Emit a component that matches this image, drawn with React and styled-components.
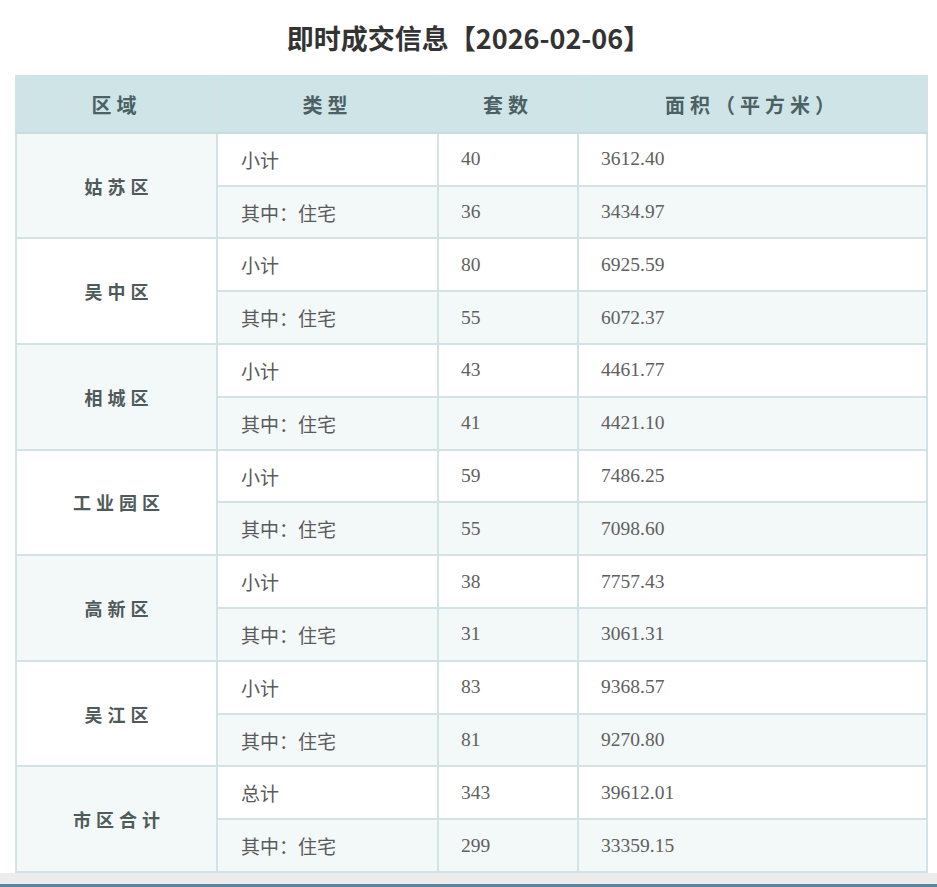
import React from "react";
import styled, { createGlobalStyle } from "styled-components";

const GlobalStyle = createGlobalStyle`
  html, body {
    margin: 0;
    padding: 0;
    background: #ffffff;
  }
  body {
    font-family: "Noto Sans CJK SC", "Noto Sans", sans-serif;
  }
`;

const Page = styled.div`
  width: 937px;
  height: 887px;
  display: flex;
  flex-direction: column;
  overflow: hidden;
`;

const Title = styled.h1`
  margin: 0;
  padding: 18px 0 0 0;
  height: 75px;
  box-sizing: border-box;
  text-align: center;
  font-size: 27px;
  line-height: 40px;
  font-weight: 700;
  color: #333333;
`;

const TableWrap = styled.div`
  padding: 0 11px 0 15px;
`;

const Table = styled.table`
  width: 911px;
  border-collapse: collapse;
  table-layout: fixed;
  border: 2px solid #d3e3e5;
`;

const HeadCell = styled.th`
  height: 55px;
  padding: 0;
  background: #cfe4e7;
  border: 2px solid #d3e3e5;
  border-bottom-color: #c9dcdf;
  color: #4c6163;
  font-size: 20px;
  font-weight: 700;
  letter-spacing: 5px;
  text-align: center;
`;

const Row = styled.tr`
  height: 52.8px;
`;

const RegionCell = styled.td`
  padding: 0 0 0 5px;
  background: ${({ shaded }) => (shaded ? "#f3f8f9" : "#ffffff")};
  border: 2px solid #d3e3e5;
  color: #4f5a5a;
  font-size: 18px;
  font-weight: 700;
  letter-spacing: 5px;
  text-align: center;
`;

const TypeCell = styled.td`
  padding: 0 0 0 23px;
  background: ${({ shaded }) => (shaded ? "#f3f8f9" : "#ffffff")};
  border: 2px solid #d3e3e5;
  color: #5a5a5a;
  font-size: 19px;
  text-align: left;
`;

const NumCell = styled.td`
  padding: 0 0 0 22px;
  background: ${({ shaded }) => (shaded ? "#f3f8f9" : "#ffffff")};
  border: 2px solid #d3e3e5;
  color: #606060;
  font-family: "Liberation Serif", "Times New Roman", serif;
  font-size: 19.5px;
  text-align: left;
`;

const Footer = styled.div`
  margin-top: auto;
  height: 14px;
  background: #ececec;
  border-bottom: 3px solid #5b8898;
  box-sizing: border-box;
`;

const data = [
  { region: "姑苏区", rows: [["小计", "40", "3612.40"], ["其中：住宅", "36", "3434.97"]] },
  { region: "吴中区", rows: [["小计", "80", "6925.59"], ["其中：住宅", "55", "6072.37"]] },
  { region: "相城区", rows: [["小计", "43", "4461.77"], ["其中：住宅", "41", "4421.10"]] },
  { region: "工业园区", rows: [["小计", "59", "7486.25"], ["其中：住宅", "55", "7098.60"]] },
  { region: "高新区", rows: [["小计", "38", "7757.43"], ["其中：住宅", "31", "3061.31"]] },
  { region: "吴江区", rows: [["小计", "83", "9368.57"], ["其中：住宅", "81", "9270.80"]] },
  { region: "市区合计", rows: [["总计", "343", "39612.01"], ["其中：住宅", "299", "33359.15"]] },
];

const App = () => {
  return (
    <Page>
      <GlobalStyle />
      <Title>即时成交信息【2026-02-06】</Title>
      <TableWrap>
        <Table>
          <colgroup>
            <col style={{ width: 201 }} />
            <col style={{ width: 221 }} />
            <col style={{ width: 140 }} />
            <col style={{ width: 349 }} />
          </colgroup>
          <thead>
            <tr>
              <HeadCell>区域</HeadCell>
              <HeadCell>类型</HeadCell>
              <HeadCell>套数</HeadCell>
              <HeadCell>面积（平方米）</HeadCell>
            </tr>
          </thead>
          <tbody>
            {data.map((group, gi) =>
              group.rows.map((row, ri) => (
                <Row key={`${gi}-${ri}`}>
                  {ri === 0 && (
                    <RegionCell rowSpan={2} shaded={gi % 2 === 0}>
                      {group.region}
                    </RegionCell>
                  )}
                  <TypeCell shaded={ri === 1}>{row[0]}</TypeCell>
                  <NumCell shaded={ri === 1}>{row[1]}</NumCell>
                  <NumCell shaded={ri === 1}>{row[2]}</NumCell>
                </Row>
              ))
            )}
          </tbody>
        </Table>
      </TableWrap>
      <Footer />
    </Page>
  );
};

export default App;
